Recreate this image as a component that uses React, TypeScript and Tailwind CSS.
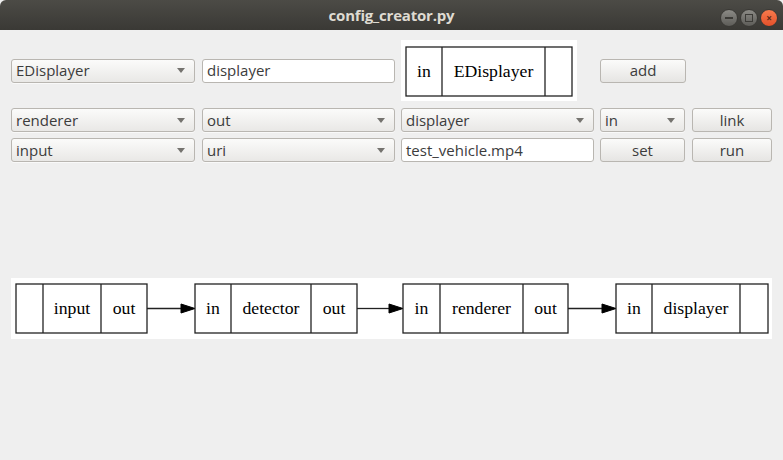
import React from "react";

const ui = { fontFamily: '"Open Sans", "Noto Sans", "DejaVu Sans", sans-serif' };

function Combo({ text, w }: { text: string; w: string }) {
  return (
    <div
      className={`${w} h-[24px] flex items-center justify-between rounded-[3px] border border-[#b9b6b1] bg-gradient-to-b from-[#fbfbfa] to-[#e9e8e6] pl-[4px] pr-[9px] text-[15px] text-[#3c3c3c] shadow-[0_1px_0_rgba(255,255,255,0.6)]`}
    >
      <span className="leading-none">{text}</span>
      <svg width="8" height="5" viewBox="0 0 8 5">
        <path d="M0 0 L8 0 L4 5 Z" fill="#75736f" />
      </svg>
    </div>
  );
}

function Edit({ text, w }: { text: string; w: string }) {
  return (
    <div
      className={`${w} h-[24px] flex items-center rounded-[3px] border border-[#b9b6b1] bg-white pl-[4px] text-[15px] text-[#3c3c3c]`}
    >
      <span className="leading-none">{text}</span>
    </div>
  );
}

function Btn({ text, w }: { text: string; w: string }) {
  return (
    <div
      className={`${w} h-[24px] flex items-center justify-center rounded-[3px] border border-[#b9b6b1] bg-gradient-to-b from-[#fbfbfa] to-[#e6e5e3] text-[15px] text-[#3c3c3c]`}
    >
      <span className="leading-none">{text}</span>
    </div>
  );
}

type Node = { x: number; w: number; cells: { x: number; label?: string }[] };

const serif = '"Liberation Serif", "Times New Roman", serif';

function Record({ x, w, divs, labels }: { x: number; w: number; divs: number[]; labels: string[] }) {
  const edges = [x, ...divs, x + w];
  return (
    <g>
      <rect x={x} y={6} width={w} height={49} fill="white" stroke="#222" strokeWidth={1.3} />
      {divs.map((d) => (
        <line key={d} x1={d} y1={6} x2={d} y2={55} stroke="#222" strokeWidth={1.3} />
      ))}
      {labels.map((l, i) =>
        l ? (
          <text
            key={i}
            x={(edges[i] + edges[i + 1]) / 2}
            y={36}
            textAnchor="middle"
            fontFamily={serif}
            fontSize={17.7}
            fill="#000"
          >
            {l}
          </text>
        ) : null
      )}
    </g>
  );
}

function Arrow({ x1, x2 }: { x1: number; x2: number }) {
  return (
    <g>
      <line x1={x1} y1={30.5} x2={x2 - 14} y2={30.5} stroke="#222" strokeWidth={1.3} />
      <path d={`M${x2 - 14} 26 L${x2} 30.5 L${x2 - 14} 35 Z`} fill="#000" stroke="#000" strokeWidth={1} />
    </g>
  );
}

export default function App() {
  return (
    <div className="w-[783px] h-[460px] flex flex-col bg-[#efefef] overflow-hidden" style={ui}>
      <div className="h-[30px] shrink-0 relative flex items-center justify-center bg-gradient-to-b from-[#4c4b46] to-[#3a3935] rounded-t-[6px]">
        <span className="text-[15px] font-bold text-[#dfdbd2] tracking-[-0.2px]">config_creator.py</span>
        <div className="absolute right-[5px] top-[9px] flex gap-[2px]">
          <div className="w-[18px] h-[18px] rounded-full bg-gradient-to-b from-[#8c8b86] to-[#5d5c58] border border-[#3a3935] flex items-center justify-center">
            <div className="w-[8px] h-[2px] bg-[#3c3b37]" />
          </div>
          <div className="w-[18px] h-[18px] rounded-full bg-gradient-to-b from-[#8c8b86] to-[#5d5c58] border border-[#3a3935] flex items-center justify-center">
            <div className="w-[8px] h-[8px] border border-[#3c3b37]" />
          </div>
          <div className="w-[18px] h-[18px] rounded-full bg-gradient-to-b from-[#f77a4c] to-[#e4502a] border border-[#3a3935] flex items-center justify-center text-[10px] font-bold leading-none text-[#5a2a18]">
            ×
          </div>
        </div>
      </div>

      <div className="pl-[11px] pt-[10px] flex items-center">
        <Combo text="EDisplayer" w="w-[184px]" />
        <div className="ml-[7px]">
          <Edit text="displayer" w="w-[193px]" />
        </div>
        <div className="ml-[6px] w-[176px] h-[61px] bg-white">
          <svg width="176" height="61">
            <g transform="translate(0,1)">
              <Record x={5} w={166} divs={[41, 144]} labels={["in", "EDisplayer", ""]} />
            </g>
          </svg>
        </div>
        <div className="ml-[23px]">
          <Btn text="add" w="w-[86px]" />
        </div>
      </div>

      <div className="pl-[11px] mt-[7px] flex items-center">
        <Combo text="renderer" w="w-[184px]" />
        <div className="ml-[7px]">
          <Combo text="out" w="w-[193px]" />
        </div>
        <div className="ml-[6px]">
          <Combo text="displayer" w="w-[193px]" />
        </div>
        <div className="ml-[6px]">
          <Combo text="in" w="w-[85px]" />
        </div>
        <div className="ml-[7px]">
          <Btn text="link" w="w-[80px]" />
        </div>
      </div>

      <div className="pl-[11px] mt-[6px] flex items-center">
        <Combo text="input" w="w-[184px]" />
        <div className="ml-[7px]">
          <Combo text="uri" w="w-[193px]" />
        </div>
        <div className="ml-[6px]">
          <Edit text="test_vehicle.mp4" w="w-[193px]" />
        </div>
        <div className="ml-[6px]">
          <Btn text="set" w="w-[85px]" />
        </div>
        <div className="ml-[7px]">
          <Btn text="run" w="w-[80px]" />
        </div>
      </div>

      <div className="ml-[11px] mt-[116px] w-[761px] h-[61px] bg-white">
        <svg width="761" height="61">
          <Record x={5} w={131} divs={[32, 90]} labels={["", "input", "out"]} />
          <Arrow x1={136} x2={184} />
          <Record x={184} w={162} divs={[220, 300]} labels={["in", "detector", "out"]} />
          <Arrow x1={346} x2={392} />
          <Record x={392} w={165} divs={[429, 512]} labels={["in", "renderer", "out"]} />
          <Arrow x1={557} x2={605} />
          <Record x={605} w={152} divs={[641, 729]} labels={["in", "displayer", ""]} />
        </svg>
      </div>
    </div>
  );
}
